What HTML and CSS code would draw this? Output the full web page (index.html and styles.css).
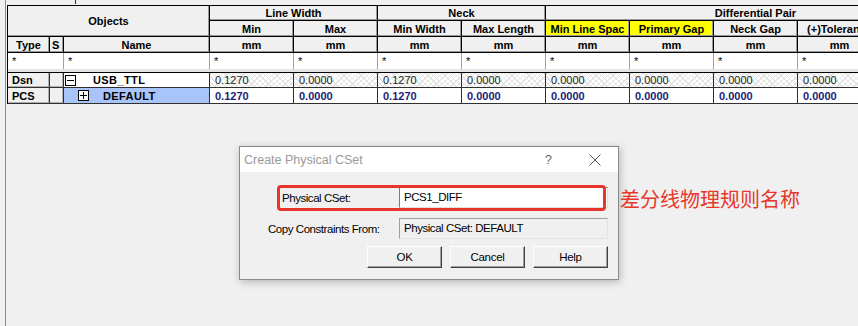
FILE: index.html
```html
<!DOCTYPE html>
<html lang="en">
<head>
	<meta charset="UTF-8">
	<title>Physical Constraint Sets</title>
	<link rel="stylesheet" href="styles.css">
</head>
<body>
	<div class="frame">
		<span class="tick"></span>
		<div class="grid">
			<div class="hd objects">Objects</div>
			<div class="hd span2">Line Width</div>
			<div class="hd span2">Neck</div>
			<div class="hd span5">Differential Pair</div>

			<div class="hd">Min</div>
			<div class="hd">Max</div>
			<div class="hd">Min Width</div>
			<div class="hd">Max Length</div>
			<div class="hd yellow">Min Line Spac</div>
			<div class="hd yellow">Primary Gap</div>
			<div class="hd">Neck Gap</div>
			<div class="hd">(+)Tolerance</div>
			<div class="hd">(-)Tolerance</div>

			<div class="hd">Type</div>
			<div class="hd left">S</div>
			<div class="hd">Name</div>
			<div class="hd">mm</div>
			<div class="hd">mm</div>
			<div class="hd">mm</div>
			<div class="hd">mm</div>
			<div class="hd">mm</div>
			<div class="hd">mm</div>
			<div class="hd">mm</div>
			<div class="hd">mm</div>
			<div class="hd">mm</div>

			<div class="star type-span">*</div>
			<div class="star">*</div>
			<div class="star">*</div>
			<div class="star">*</div>
			<div class="star">*</div>
			<div class="star">*</div>
			<div class="star">*</div>
			<div class="star">*</div>
			<div class="star">*</div>
			<div class="star">*</div>
			<div class="star">*</div>

			<div class="gap"></div>

			<div class="cell kind">Dsn</div>
			<div class="cell kind"></div>
			<div class="cell name">
				<svg class="tree" width="11" height="11" viewBox="0 0 11 11"><rect x="0.5" y="0.5" width="10" height="10" fill="#fff" stroke="#000"/><path d="M2 5.5h7" stroke="#000"/></svg>
				<span class="label dsn-label">USB_TTL</span>
			</div>
			<div class="cell num hatch">0.1270</div>
			<div class="cell num hatch">0.0000</div>
			<div class="cell num hatch">0.1270</div>
			<div class="cell num hatch">0.0000</div>
			<div class="cell num hatch">0.0000</div>
			<div class="cell num hatch">0.0000</div>
			<div class="cell num hatch">0.0000</div>
			<div class="cell num hatch">0.0000</div>
			<div class="cell num hatch">0.0000</div>

			<div class="cell kind">PCS</div>
			<div class="cell kind"></div>
			<div class="cell name selected">
				<svg class="tree sub" width="11" height="11" viewBox="0 0 11 11"><rect x="0.5" y="0.5" width="10" height="10" fill="#fff" stroke="#000"/><path d="M2 5.5h7M5.5 2v7" stroke="#000"/></svg>
				<span class="label pcs-label">DEFAULT</span>
			</div>
			<div class="cell num bold">0.1270</div>
			<div class="cell num bold">0.0000</div>
			<div class="cell num bold">0.1270</div>
			<div class="cell num bold">0.0000</div>
			<div class="cell num bold">0.0000</div>
			<div class="cell num bold">0.0000</div>
			<div class="cell num bold">0.0000</div>
			<div class="cell num bold">0.0000</div>
			<div class="cell num bold">0.0000</div>
		</div>
	</div>

	<div class="dialog">
		<div class="titlebar">
			<span class="title">Create Physical CSet</span>
			<span class="help-q">?</span>
			<svg class="close" width="12" height="12" viewBox="0 0 12 12"><path d="M0.5 0.5l11 11M11.5 0.5l-11 11" stroke="#5a5a5a" stroke-width="1"/></svg>
		</div>
		<div class="body">
			<div class="form">
				<label class="lbl lbl-name">Physical CSet:</label>
				<div class="field edit">PCS1_DIFF</div>
				<label class="lbl lbl-copy">Copy Constraints From:</label>
				<div class="field readonly">Physical CSet: DEFAULT</div>
			</div>
			<div class="buttons">
				<button class="btn">OK</button>
				<button class="btn">Cancel</button>
				<button class="btn">Help</button>
			</div>
			<div class="mark"></div>
		</div>
	</div>

	<div class="note">差分线物理规则名称</div>
</body>
</html>
```

FILE: styles.css
```css
html, body {
	margin: 0;
	padding: 0;
}
body {
	width: 858px;
	height: 326px;
	overflow: hidden;
	background: #f0f0f0;
	font-family: "Liberation Sans", Arial, sans-serif;
	position: relative;
}
.frame {
	position: relative;
	margin-left: 5px;
	height: 326px;
	padding: 5px 0 0 1px;
	box-sizing: border-box;
	border-left: 1px solid #8c8c8c;
	overflow: hidden;
}
.tick {
	position: absolute;
	left: 69px;
	top: 0;
	width: 1px;
	height: 4px;
	background: #333;
}
.grid {
	display: grid;
	grid-template-columns: 42px 14px 146px repeat(9, 84px);
	grid-template-rows: 15px 16px 16px 16px 4px 15px 16px;
	width: max-content;
	border-left: 1px solid #000;
	border-top: 1px solid #000;
	font-size: 11px;
}
.grid > div {
	box-sizing: border-box;
	overflow: hidden;
	white-space: nowrap;
}
.hd {
	background: #f0f0f0;
	border-right: 1px solid #000;
	border-bottom: 1px solid #000;
	box-shadow: inset -1px -1px 0 #9a9a9a;
	font-weight: bold;
	text-align: center;
	display: flex;
	align-items: center;
	justify-content: center;
}
.hd.left {
	justify-content: flex-start;
	padding-left: 2px;
}
.objects {
	grid-column: 1 / 4;
	grid-row: 1 / 3;
}
.span2 {
	grid-column: span 2;
}
.span5 {
	grid-column: span 5;
}
.yellow {
	background: #ffff00;
}
.star {
	background: #fff;
	border-right: 1px solid #a0a0a0;
	padding: 2px 0 0 4px;
	line-height: 12px;
}
.type-span {
	grid-column: span 2;
}
.gap {
	grid-column: 1 / -1;
	background: #e4e4e4;
	border-bottom: 1px solid #000;
}
.cell {
	border-right: 1px solid #303030;
	border-bottom: 1px solid #303030;
	background: #fff;
	display: flex;
	align-items: center;
}
.kind {
	background: #f0f0f0;
	font-weight: bold;
	padding-left: 4px;
	box-shadow: inset -1px -1px 0 #b0b0b0;
}
.name {
	font-weight: bold;
	padding-left: 1px;
}
.selected {
	background: #a8c4f8;
}
.tree {
	flex: none;
}
.tree.sub {
	margin-left: 13px;
}
.dsn-label {
	margin-left: 17px;
	letter-spacing: 0.4px;
}
.pcs-label {
	margin-left: 14px;
	letter-spacing: 0.4px;
}
.num {
	padding-left: 5px;
	color: #1e1e1e;
}
.num.bold {
	font-weight: bold;
	color: #1c1c78;
}
.hatch {
	background-color: #fff;
	background-image:
		repeating-linear-gradient(45deg, transparent 0 3px, #e2e2e2 3px 4px),
		repeating-linear-gradient(-45deg, transparent 0 3px, #e2e2e2 3px 4px);
}

/* dialog */
.dialog {
	position: absolute;
	left: 239px;
	top: 146px;
	width: 380px;
	height: 134px;
	box-sizing: border-box;
	border: 1px solid #8a8a8a;
	background: #f0f0f0;
	box-shadow: 1px 2px 8px rgba(0, 0, 0, 0.25);
	font-family: "Liberation Sans", Arial, sans-serif;
	font-size: 11.5px;
	letter-spacing: -0.45px;
	color: #000;
}
.titlebar {
	height: 25px;
	background: #fff;
	display: flex;
	align-items: center;
	padding-left: 4px;
	letter-spacing: 0;
}
.title {
	font-size: 12.5px;
	color: #9a9a9a;
	flex: 1;
}
.help-q {
	font-size: 13px;
	color: #6a6a6a;
	margin-right: 37px;
}
.close {
	margin-right: 17px;
}
.body {
	position: relative;
	padding-top: 15px;
}
.form {
	display: grid;
	grid-template-columns: 159px 209px;
	grid-template-rows: 21px 21px;
	row-gap: 10px;
	align-items: center;
}
.lbl-name {
	padding-left: 42px;
}
.lbl-copy {
	padding-left: 28px;
}
.field {
	height: 21px;
	box-sizing: border-box;
	padding: 2px 0 0 4px;
	line-height: 15px;
}
.edit {
	background: #fff;
	border-top: 1px solid #7a7a7a;
	border-left: 1px solid #7a7a7a;
	border-right: 1px solid #e0e0e0;
	border-bottom: 1px solid #e0e0e0;
}
.readonly {
	background: #f0f0f0;
	border-top: 1px solid #a0a0a0;
	border-left: 1px solid #a0a0a0;
	border-right: 1px solid #e3e3e3;
	border-bottom: 1px solid #e3e3e3;
}
.buttons {
	display: flex;
	justify-content: flex-end;
	gap: 8px;
	padding: 7px 10px 0 0;
}
.btn {
	width: 75px;
	height: 22px;
	box-sizing: border-box;
	background: #f0f0f0;
	border: 1px solid;
	border-color: #fff #404040 #404040 #fff;
	box-shadow: inset -1px -1px 0 #a0a0a0;
	font-family: "Liberation Sans", Arial, sans-serif;
	font-size: 11.5px;
	letter-spacing: -0.3px;
	padding: 0;
	color: #000;
}
.mark {
	position: absolute;
	left: 37px;
	top: 13px;
	width: 329px;
	height: 26px;
	box-sizing: border-box;
	border: 3px solid #e8342a;
	border-radius: 4px;
}
.note {
	position: absolute;
	left: 620px;
	top: 189px;
	font-family: "Noto Sans CJK SC", sans-serif;
	font-size: 20px;
	line-height: 20px;
	color: #e8372b;
}
```
